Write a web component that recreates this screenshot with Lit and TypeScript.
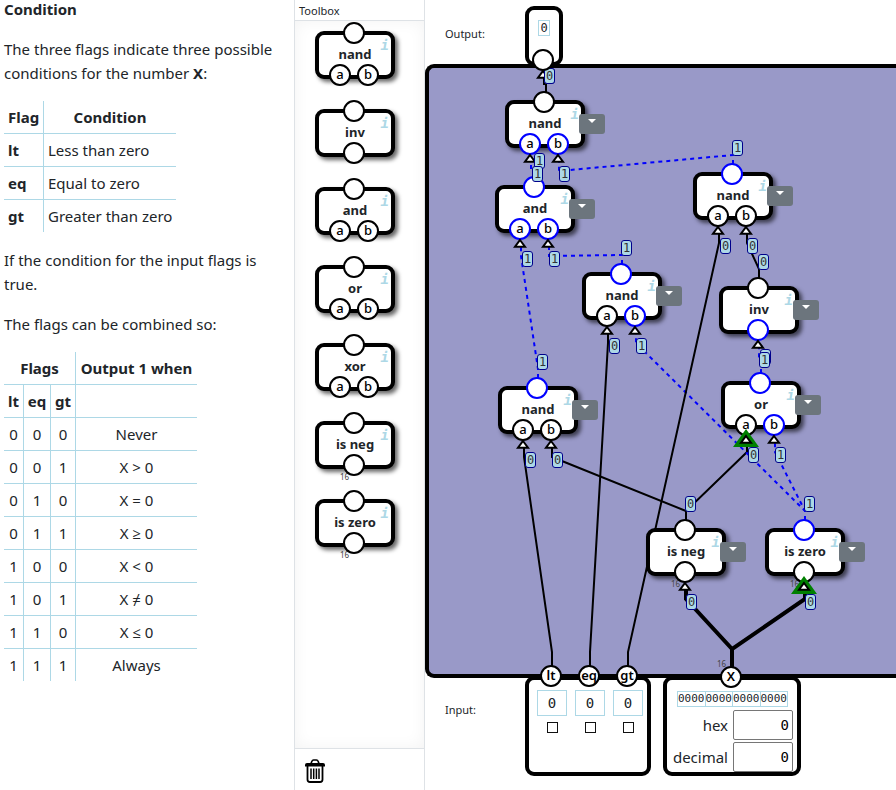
import { LitElement, html, svg, css, nothing } from "lit";
import { customElement, property } from "lit/decorators.js";
import { classMap } from "lit/directives/class-map.js";
import { styleMap } from "lit/directives/style-map.js";

interface Gate {
  id: string;
  label: string;
  x: number;
  y: number;
  out: number;
  ins: number[];
  wide?: boolean;
}

interface Wire {
  points: string;
  on?: boolean;
  bus?: boolean;
}

/* Offsets of connectors relative to a gate's top-left corner */
const OUT_X = 40;
const OUT_Y = -17;
const IN_Y = 71;
const inX = (g: Gate, pin: number) => (g.ins.length === 1 ? 40 : pin === 0 ? 26 : 54);
const portX = (g: Gate, pin: number) => (g.ins.length === 1 ? 39 : pin === 0 ? 25 : 53);

/* Gate positions inside the circuit canvas */
const GATES: Gate[] = [
  { id: "n1", label: "nand", x: 76, y: 32, out: 0, ins: [1, 1] },
  { id: "and", label: "and", x: 66, y: 117, out: 1, ins: [1, 1] },
  { id: "n2", label: "nand", x: 264, y: 104, out: 1, ins: [0, 0] },
  { id: "n3", label: "nand", x: 153, y: 204, out: 1, ins: [0, 1] },
  { id: "inv", label: "inv", x: 290, y: 218, out: 0, ins: [1] },
  { id: "n4", label: "nand", x: 69, y: 318, out: 1, ins: [0, 0] },
  { id: "or", label: "or", x: 292, y: 313, out: 1, ins: [0, 1] },
  { id: "neg", label: "is neg", x: 217, y: 460, out: 0, ins: [0], wide: true },
  { id: "zero", label: "is zero", x: 336, y: 460, out: 1, ins: [0], wide: true },
];

const byId = (id: string) => GATES.find((g) => g.id === id)!;

function link(from: string, to: string, pin: number): Wire {
  const a = byId(from);
  const b = byId(to);
  const ax = a.x + OUT_X;
  const bx = b.x + inX(b, pin);
  return {
    points: `${ax},${a.y - 8} ${ax},${a.y + OUT_Y} ${bx},${b.y + IN_Y} ${bx},${b.y + 62}`,
    on: a.out === 1,
  };
}

function feed(x: number, turn: number, to: string, pin: number, bus = false): Wire {
  const b = byId(to);
  const bx = b.x + inX(b, pin);
  return { points: `${x},610 ${x},${turn} ${bx},${b.y + IN_Y} ${bx},${b.y + 60}`, bus };
}

const WIRES: Wire[] = [
  { points: "117,24 117,16 115,16 115,9" },
  link("and", "n1", 0),
  link("n2", "n1", 1),
  link("n4", "and", 0),
  link("n3", "and", 1),
  link("inv", "n2", 1),
  link("or", "inv", 0),
  link("neg", "n4", 1),
  link("neg", "or", 0),
  link("zero", "n3", 1),
  link("zero", "or", 1),
  feed(123, 584, "n4", 0),
  feed(161, 584, "n3", 0),
  feed(199, 584, "n2", 0),
  feed(303, 581, "neg", 0, true),
  feed(303, 581, "zero", 0, true),
];

const MARKED = new Set(["or:0", "zero:0"]);

const PALETTE = [
  { label: "nand", pins: 2, wide: false },
  { label: "inv", pins: 1, wide: false },
  { label: "and", pins: 2, wide: false },
  { label: "or", pins: 2, wide: false },
  { label: "xor", pins: 2, wide: false },
  { label: "is neg", pins: 1, wide: true },
  { label: "is zero", pins: 1, wide: true },
];

const TRUTH: [string, string][] = [
  ["000", "Never"],
  ["001", "X > 0"],
  ["010", "X = 0"],
  ["011", "X ≥ 0"],
  ["100", "X < 0"],
  ["101", "X ≠ 0"],
  ["110", "X ≤ 0"],
  ["111", "Always"],
];

@customElement("gate-node")
class GateNode extends LitElement {
  @property() label = "";
  @property({ type: Number }) out = 0;
  @property({ attribute: false }) ins: number[] = [0];
  @property({ type: Boolean }) wide = false;
  @property({ type: Boolean }) menu = false;

  static styles = css`
    :host {
      display: block;
      position: relative;
      width: 80px;
      height: 48px;
      font-family: "Noto Sans", sans-serif;
      color: #212529;
    }
    .body {
      box-sizing: border-box;
      height: 100%;
      padding-bottom: 2px;
      display: flex;
      align-items: center;
      justify-content: center;
      border: 4px solid #000;
      border-radius: 9px;
      background: #fff;
      box-shadow: 3px 3px 4px rgba(0, 0, 0, 0.6);
      font-size: 13px;
      line-height: 20px;
      font-weight: 700;
    }
    .info {
      position: absolute;
      top: 6px;
      right: 6px;
      padding: 0;
      border: 0;
      background: none;
      color: lightblue;
      font: italic 700 14px/16px "DejaVu Sans Mono", monospace;
    }
    .port {
      box-sizing: border-box;
      position: absolute;
      width: 22px;
      height: 22px;
      border: 2px solid #000;
      border-radius: 50%;
      background: #fff;
      color: #000;
      font-size: 13px;
      font-weight: 500;
      line-height: 17px;
      text-align: center;
    }
    .on {
      border-color: #00f;
    }
    .top {
      left: 28px;
      top: -9px;
    }
    .bottom {
      left: 28px;
      top: 33px;
    }
    .a {
      left: 14px;
    }
    .b {
      left: 42px;
    }
    .bits {
      position: absolute;
      left: 25px;
      top: 51px;
      font-size: 8px;
      line-height: 10px;
      color: #444;
    }
    .menu {
      position: absolute;
      left: 74px;
      top: 14px;
      width: 26px;
      height: 20px;
      padding: 0 0 6px;
      display: flex;
      align-items: center;
      justify-content: center;
      border: 0;
      border-radius: 3px;
      background: #6c757d;
    }
    .menu::after {
      content: "";
      border: 4px solid transparent;
      border-top-color: #fff;
      border-bottom: 0;
    }
  `;

  render() {
    const two = this.ins.length === 2;
    return html`
      <div class="body">${this.label}</div>
      <button class="info" aria-label="About ${this.label}">i</button>
      ${this.wide ? html`<span class="bits">16</span>` : nothing}
      <span class=${classMap({ port: true, top: true, on: this.out === 1 })}></span>
      ${this.ins.map(
        (v, i) => html`<span
          class=${classMap({ port: true, bottom: true, on: v === 1, a: two && i === 0, b: two && i === 1 })}
          >${two ? "ab"[i] : nothing}</span
        >`
      )}
      ${this.menu ? html`<button class="menu" aria-label="Menu for ${this.label}"></button>` : nothing}
    `;
  }
}

@customElement("app-root")
class AppRoot extends LitElement {
  static styles = css`
    :host {
      display: grid;
      grid-template-columns: 294px 131px minmax(0, 1fr);
      min-height: 100vh;
      overflow: hidden;
      background: #fff;
      color: #212529;
      font: 15px/24px "Noto Sans", "Open Sans", sans-serif;
    }
    .text {
      padding: 0 16px 0 4px;
    }
    h1 {
      margin: 0 0 19px;
      font-size: 15px;
      line-height: 18px;
    }
    p {
      margin: 0 0 16px;
    }
    table {
      table-layout: fixed;
      border-spacing: 0;
      margin-bottom: 16px;
    }
    .conditions {
      width: 172px;
    }
    .truth {
      width: 193px;
      text-align: center;
    }
    .c40 {
      width: 40px;
    }
    .c20 {
      width: 20px;
    }
    .c27 {
      width: 27px;
    }
    .c25 {
      width: 25px;
    }
    th,
    td {
      height: 24px;
      padding: 4px 0;
      border-right: 1px solid lightblue;
      border-bottom: 1px solid lightblue;
      white-space: nowrap;
    }
    .conditions th,
    .conditions td {
      padding: 4px;
    }
    tr > :last-child {
      border-right: 0;
    }
    tbody tr:last-child > * {
      border-bottom: 0;
    }
    tbody th {
      text-align: left;
    }
    .toolbox {
      display: flex;
      flex-direction: column;
      border: 1px solid #dee2e6;
      border-width: 0 1px;
    }
    .toolbox h2 {
      margin: 0;
      padding: 2px 4px 0;
      font-size: 11px;
      font-weight: 400;
      line-height: 18px;
      border-bottom: 1px solid #dee2e6;
    }
    .palette {
      flex: 1;
      display: flex;
      flex-direction: column;
      gap: 30px;
      padding: 10px 20px;
      background: #fff;
      box-shadow: inset 0 0 16px rgba(0, 0, 0, 0.05);
    }
    .bin {
      display: flex;
      height: 42px;
      padding: 2px 0 0 10px;
      box-sizing: border-box;
      align-items: center;
      border-top: 1px solid #dee2e6;
    }
    .trash {
      display: flex;
      padding: 0;
      border: 0;
      background: none;
    }
    .stage {
      display: flex;
      flex-direction: column;
      min-width: 0;
    }
    .row {
      display: flex;
      font-size: 11px;
      line-height: 16px;
    }
    .row-label {
      width: 80px;
      padding-left: 20px;
    }
    .outputs {
      height: 64px;
    }
    .outputs .row-label {
      padding-top: 26px;
    }
    .inputs {
      height: 112px;
    }
    .inputs .row-label {
      padding-top: 24px;
    }
    .device {
      box-sizing: border-box;
      position: relative;
      z-index: 2;
      border: 4px solid #000;
      border-radius: 9px;
      background: #fff;
    }
    .probe {
      display: flex;
      justify-content: center;
      align-items: flex-start;
      width: 38px;
      height: 60px;
      margin-top: 6px;
      padding-top: 10px;
    }
    .bit {
      border: 1px solid lightblue;
      font: 12px/14px "DejaVu Sans Mono", monospace;
      padding: 0 1px;
    }
    .pin {
      box-sizing: border-box;
      position: absolute;
      width: 22px;
      height: 22px;
      border: 2px solid #000;
      border-radius: 50%;
      background: #fff;
      color: #000;
      font-size: 13px;
      font-weight: 600;
      line-height: 17px;
      text-align: center;
    }
    .probe .pin {
      left: 3px;
      top: 39px;
    }
    .circuit {
      box-sizing: border-box;
      position: relative;
      flex: 1;
      min-height: 614px;
      border: 4px solid #000;
      border-right: 0;
      border-radius: 9px 0 0 9px;
      background: #9999c8;
    }
    .layer {
      position: absolute;
      inset: 0;
      width: 100%;
      height: 100%;
      overflow: visible;
      pointer-events: none;
    }
    .wire {
      fill: none;
      stroke: #000;
      stroke-width: 2;
    }
    .wire.on {
      stroke: #00f;
      stroke-dasharray: 4 4;
    }
    .wire.bus {
      stroke-width: 4;
    }
    .arrow {
      fill: #fff;
      stroke: #000;
      stroke-width: 2;
    }
    .mark {
      fill: green;
    }
    .gate,
    .value,
    .bus-size {
      position: absolute;
    }
    .value {
      box-sizing: border-box;
      width: 11px;
      height: 16px;
      border: 1px solid #00008b;
      border-radius: 3px;
      background: lightblue;
      color: #333;
      font: 12px/14px "DejaVu Sans Mono", monospace;
      text-align: center;
    }
    .bus-size {
      left: 288px;
      top: 591px;
      font-size: 8px;
      line-height: 10px;
      color: #444;
    }
    .flags {
      display: flex;
      gap: 8px;
      margin: -2px 12px 0 0;
      padding: 10px 4px 0 8px;
      height: 100px;
    }
    .flag {
      position: relative;
      display: flex;
      flex-direction: column;
      align-items: center;
      gap: 6px;
    }
    .flag .pin {
      left: 3px;
      top: -25px;
    }
    .flag output {
      box-sizing: border-box;
      width: 30px;
      height: 26px;
      border: 1px solid lightblue;
      font: 14px/24px "DejaVu Sans Mono", monospace;
      text-align: center;
    }
    .flag input {
      appearance: none;
      box-sizing: border-box;
      width: 11px;
      height: 11px;
      margin: 0;
      border: 1px solid #111;
      background: #fff;
    }
    .number {
      width: 138px;
      height: 100px;
      margin-top: -2px;
      padding: 11px 4px 0;
      display: flex;
      flex-direction: column;
      gap: 2px;
    }
    .number .pin {
      left: 53px;
      top: -14px;
    }
    .bits {
      display: flex;
      align-self: flex-end;
      margin: 0 5px 1px 0;
      border-left: 1px solid lightblue;
      font: 11px/14px "DejaVu Sans Mono", monospace;
    }
    .nibble {
      border: 1px solid lightblue;
      border-left: 0;
    }
    .field {
      display: flex;
      justify-content: flex-end;
      align-items: center;
      gap: 5px;
      font-size: 15px;
    }
    .field input {
      box-sizing: border-box;
      width: 60px;
      height: 30px;
      padding: 0 3px;
      border: 1px solid #767676;
      border-radius: 2px;
      background: #fff;
      color: #000;
      font: 14px "DejaVu Sans Mono", monospace;
      text-align: right;
    }
  `;

  private value(x: number, y: number, v: number) {
    return html`<span class="value" style=${styleMap({ left: `${x}px`, top: `${y}px` })}>${v}</span>`;
  }

  private arrow(x: number, y: number, marked = false) {
    return svg`
      ${marked ? svg`<path class="mark" d="M${x} ${y + 4}l13 18h-26z" />` : nothing}
      <path class="arrow" d="M${x} ${y + 11}l5 6.7h-10z" />`;
  }

  private renderText() {
    return html`
      <section class="text">
        <h1>Condition</h1>
        <p>The three flags indicate three possible conditions for the number <b>X</b>:</p>
        <table class="conditions">
          <colgroup><col class="c40" /><col /></colgroup>
          <thead>
            <tr><th>Flag</th><th>Condition</th></tr>
          </thead>
          <tbody>
            <tr><th>lt</th><td>Less than zero</td></tr>
            <tr><th>eq</th><td>Equal to zero</td></tr>
            <tr><th>gt</th><td>Greater than zero</td></tr>
          </tbody>
        </table>
        <p>If the condition for the input flags is true.</p>
        <p>The flags can be combined so:</p>
        <table class="truth">
          <colgroup><col class="c20" /><col class="c27" /><col class="c25" /><col /></colgroup>
          <thead>
            <tr><th colspan="3">Flags</th><th>Output 1 when</th></tr>
            <tr><th>lt</th><th>eq</th><th>gt</th><td></td></tr>
          </thead>
          <tbody>
            ${TRUTH.map(
              ([bits, result]) => html`<tr>${[...bits].map((b) => html`<td>${b}</td>`)}<td>${result}</td></tr>`
            )}
          </tbody>
        </table>
      </section>
    `;
  }

  private renderToolbox() {
    return html`
      <aside class="toolbox">
        <h2>Toolbox</h2>
        <div class="palette">
          ${PALETTE.map(
            (p) => html`<gate-node .label=${p.label} .ins=${Array(p.pins).fill(0)} .wide=${p.wide}></gate-node>`
          )}
        </div>
        <div class="bin">
          <button class="trash" aria-label="Delete">
            <svg width="20" height="24" viewBox="0 0 20 24" fill="none" stroke="#000">
              <path d="M6 4.500L7 2q.3-1 1.500-1h3q1.200 0 1.500 1l1 2.500" stroke-width="1.600" />
              <path d="M0 7.500V6q0-2 2-2h16q2 0 2 2v1.500z" fill="#000" stroke="none" />
              <path d="M2.500 7v13.500q0 2.500 2.500 2.500h10q2.500 0 2.500-2.500V7" stroke-width="1.800" />
              <path d="M6 9.500v10.500M8.700 9.500v10.500M11.400 9.500v10.500M14 9.500v10.500" stroke-width="1.500" />
            </svg>
          </button>
        </div>
      </aside>
    `;
  }

  private renderCircuit() {
    return html`
      <div class="circuit">
        <svg class="layer">
          ${WIRES.map(
            (w) => svg`<polyline class=${classMap({ wire: true, on: !!w.on, bus: !!w.bus })} points=${w.points} />`
          )}
        </svg>
        ${GATES.map(
          (g) => html`<gate-node
            class="gate"
            style=${styleMap({ left: `${g.x}px`, top: `${g.y}px` })}
            .label=${g.label}
            .out=${g.out}
            .ins=${g.ins}
            .wide=${!!g.wide}
            .menu=${true}
          ></gate-node>`
        )}
        <svg class="layer">
          ${this.arrow(114, -8)}
          ${GATES.map((g) => g.ins.map((_, i) => this.arrow(g.x + portX(g, i), g.y + 44, MARKED.has(`${g.id}:${i}`))))}
        </svg>
        ${this.value(115, 0, 0)} ${GATES.map((g) => this.value(g.x + 39, g.y - 32, g.out))}
        ${GATES.map((g) => g.ins.map((v, i) => this.value(g.x + inX(g, i) + (i === 0 && g.ins.length === 2 ? 1 : 0), g.y + 66, v)))}
        <span class="bus-size">16</span>
      </div>
    `;
  }

  render() {
    return html`
      ${this.renderText()} ${this.renderToolbox()}
      <main class="stage">
        <div class="row outputs">
          <span class="row-label">Output:</span>
          <div class="device probe"><span class="bit">0</span><span class="pin"></span></div>
        </div>
        ${this.renderCircuit()}
        <div class="row inputs">
          <span class="row-label">Input:</span>
          <div class="device flags">
            ${["lt", "eq", "gt"].map(
              (f) => html`<div class="flag">
                <label class="pin" for=${f}>${f}</label>
                <output>0</output>
                <input id=${f} type="checkbox" />
              </div>`
            )}
          </div>
          <div class="device number">
            <span class="pin">X</span>
            <div class="bits">${[0, 1, 2, 3].map(() => html`<span class="nibble">0000</span>`)}</div>
            <div class="field"><label for="hex">hex</label><input id="hex" value="0" /></div>
            <div class="field"><label for="dec">decimal</label><input id="dec" value="0" /></div>
          </div>
        </div>
      </main>
    `;
  }
}
